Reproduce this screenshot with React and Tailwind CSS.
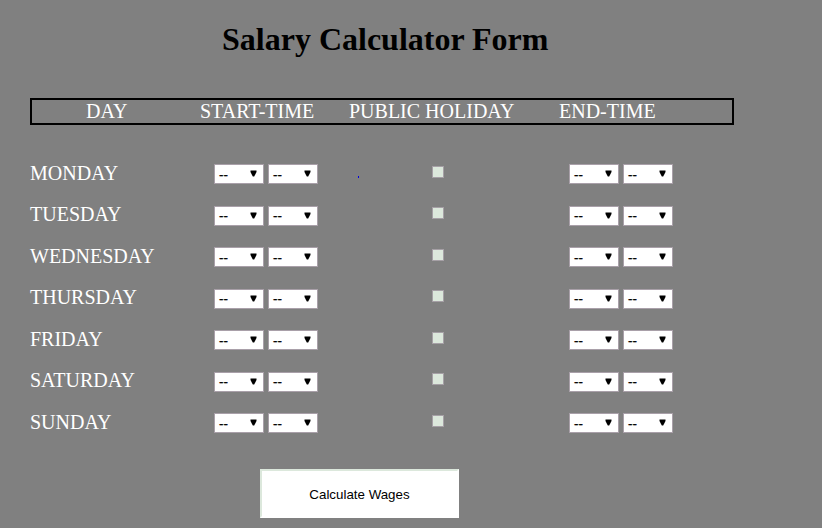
const days = ['MONDAY', 'TUESDAY', 'WEDNESDAY', 'THURSDAY', 'FRIDAY', 'SATURDAY', 'SUNDAY'];

function TimeSelect() {
  return (
    <button
      type="button"
      className="flex h-5 w-[50px] items-center justify-between border border-[#a9a0a9] bg-white pl-1 pr-1.5 font-['Liberation_Sans',Arial,sans-serif] text-[13.333px] leading-none text-black"
    >
      <span className="pt-px [-webkit-text-stroke:0.3px_black]">--</span>
      <svg width="7" height="7" viewBox="0 0 7 7" className="mb-px">
        <path d="M0.5 0.5H6.5V2L4.2 6.5H2.8L0.5 2Z" fill="#000" />
      </svg>
    </button>
  );
}

function TimePair() {
  return (
    <div className="flex gap-1 pt-px">
      <TimeSelect />
      <TimeSelect />
    </div>
  );
}

function DayRow({ day, marked }) {
  return (
    <div className="relative grid h-[41.5px] grid-cols-[184px_218px_137px_104px] items-start">
      <span className="-mt-[0.2px] leading-[20px]">{day}</span>
      <TimePair />
      <input
        type="checkbox"
        className="mt-[2.8px] h-3 w-3 appearance-none border border-[#a6a0a6] bg-[#dce8dc]"
      />
      <TimePair />
      {marked && <i className="absolute left-[328px] top-[13px] h-0.5 w-px bg-[#0000e0]" />}
    </div>
  );
}

export default function App() {
  return (
    <main className="h-[528px] w-[822px] overflow-hidden bg-[#808080] pl-[30px] pt-[21px] font-['Liberation_Serif','Times_New_Roman',serif] text-[20px] text-white">
      <h1 className="ml-[192px] whitespace-nowrap text-[32px] font-bold leading-[37px] text-black">
        Salary Calculator Form
      </h1>
      <div className="mt-10 grid h-[27px] w-[704px] grid-cols-[114px_149px_210px_1fr] border-2 border-black pl-[54px] leading-[23px]">
        <span>DAY</span>
        <span>START-TIME</span>
        <span>PUBLIC HOLIDAY</span>
        <span>END-TIME</span>
      </div>
      <form className="pt-[38px]">
        {days.map((day, index) => (
          <DayRow key={day} day={day} marked={index === 0} />
        ))}
        <button
          type="button"
          className="ml-[230px] mt-[15px] block h-[49px] w-[199px] border-2 border-b-white border-l-[#dce8dc] border-r-white border-t-[#dce8dc] bg-white pt-[3px] font-['Liberation_Sans',Arial,sans-serif] text-[13.333px] text-black"
        >
          Calculate Wages
        </button>
      </form>
    </main>
  );
}
